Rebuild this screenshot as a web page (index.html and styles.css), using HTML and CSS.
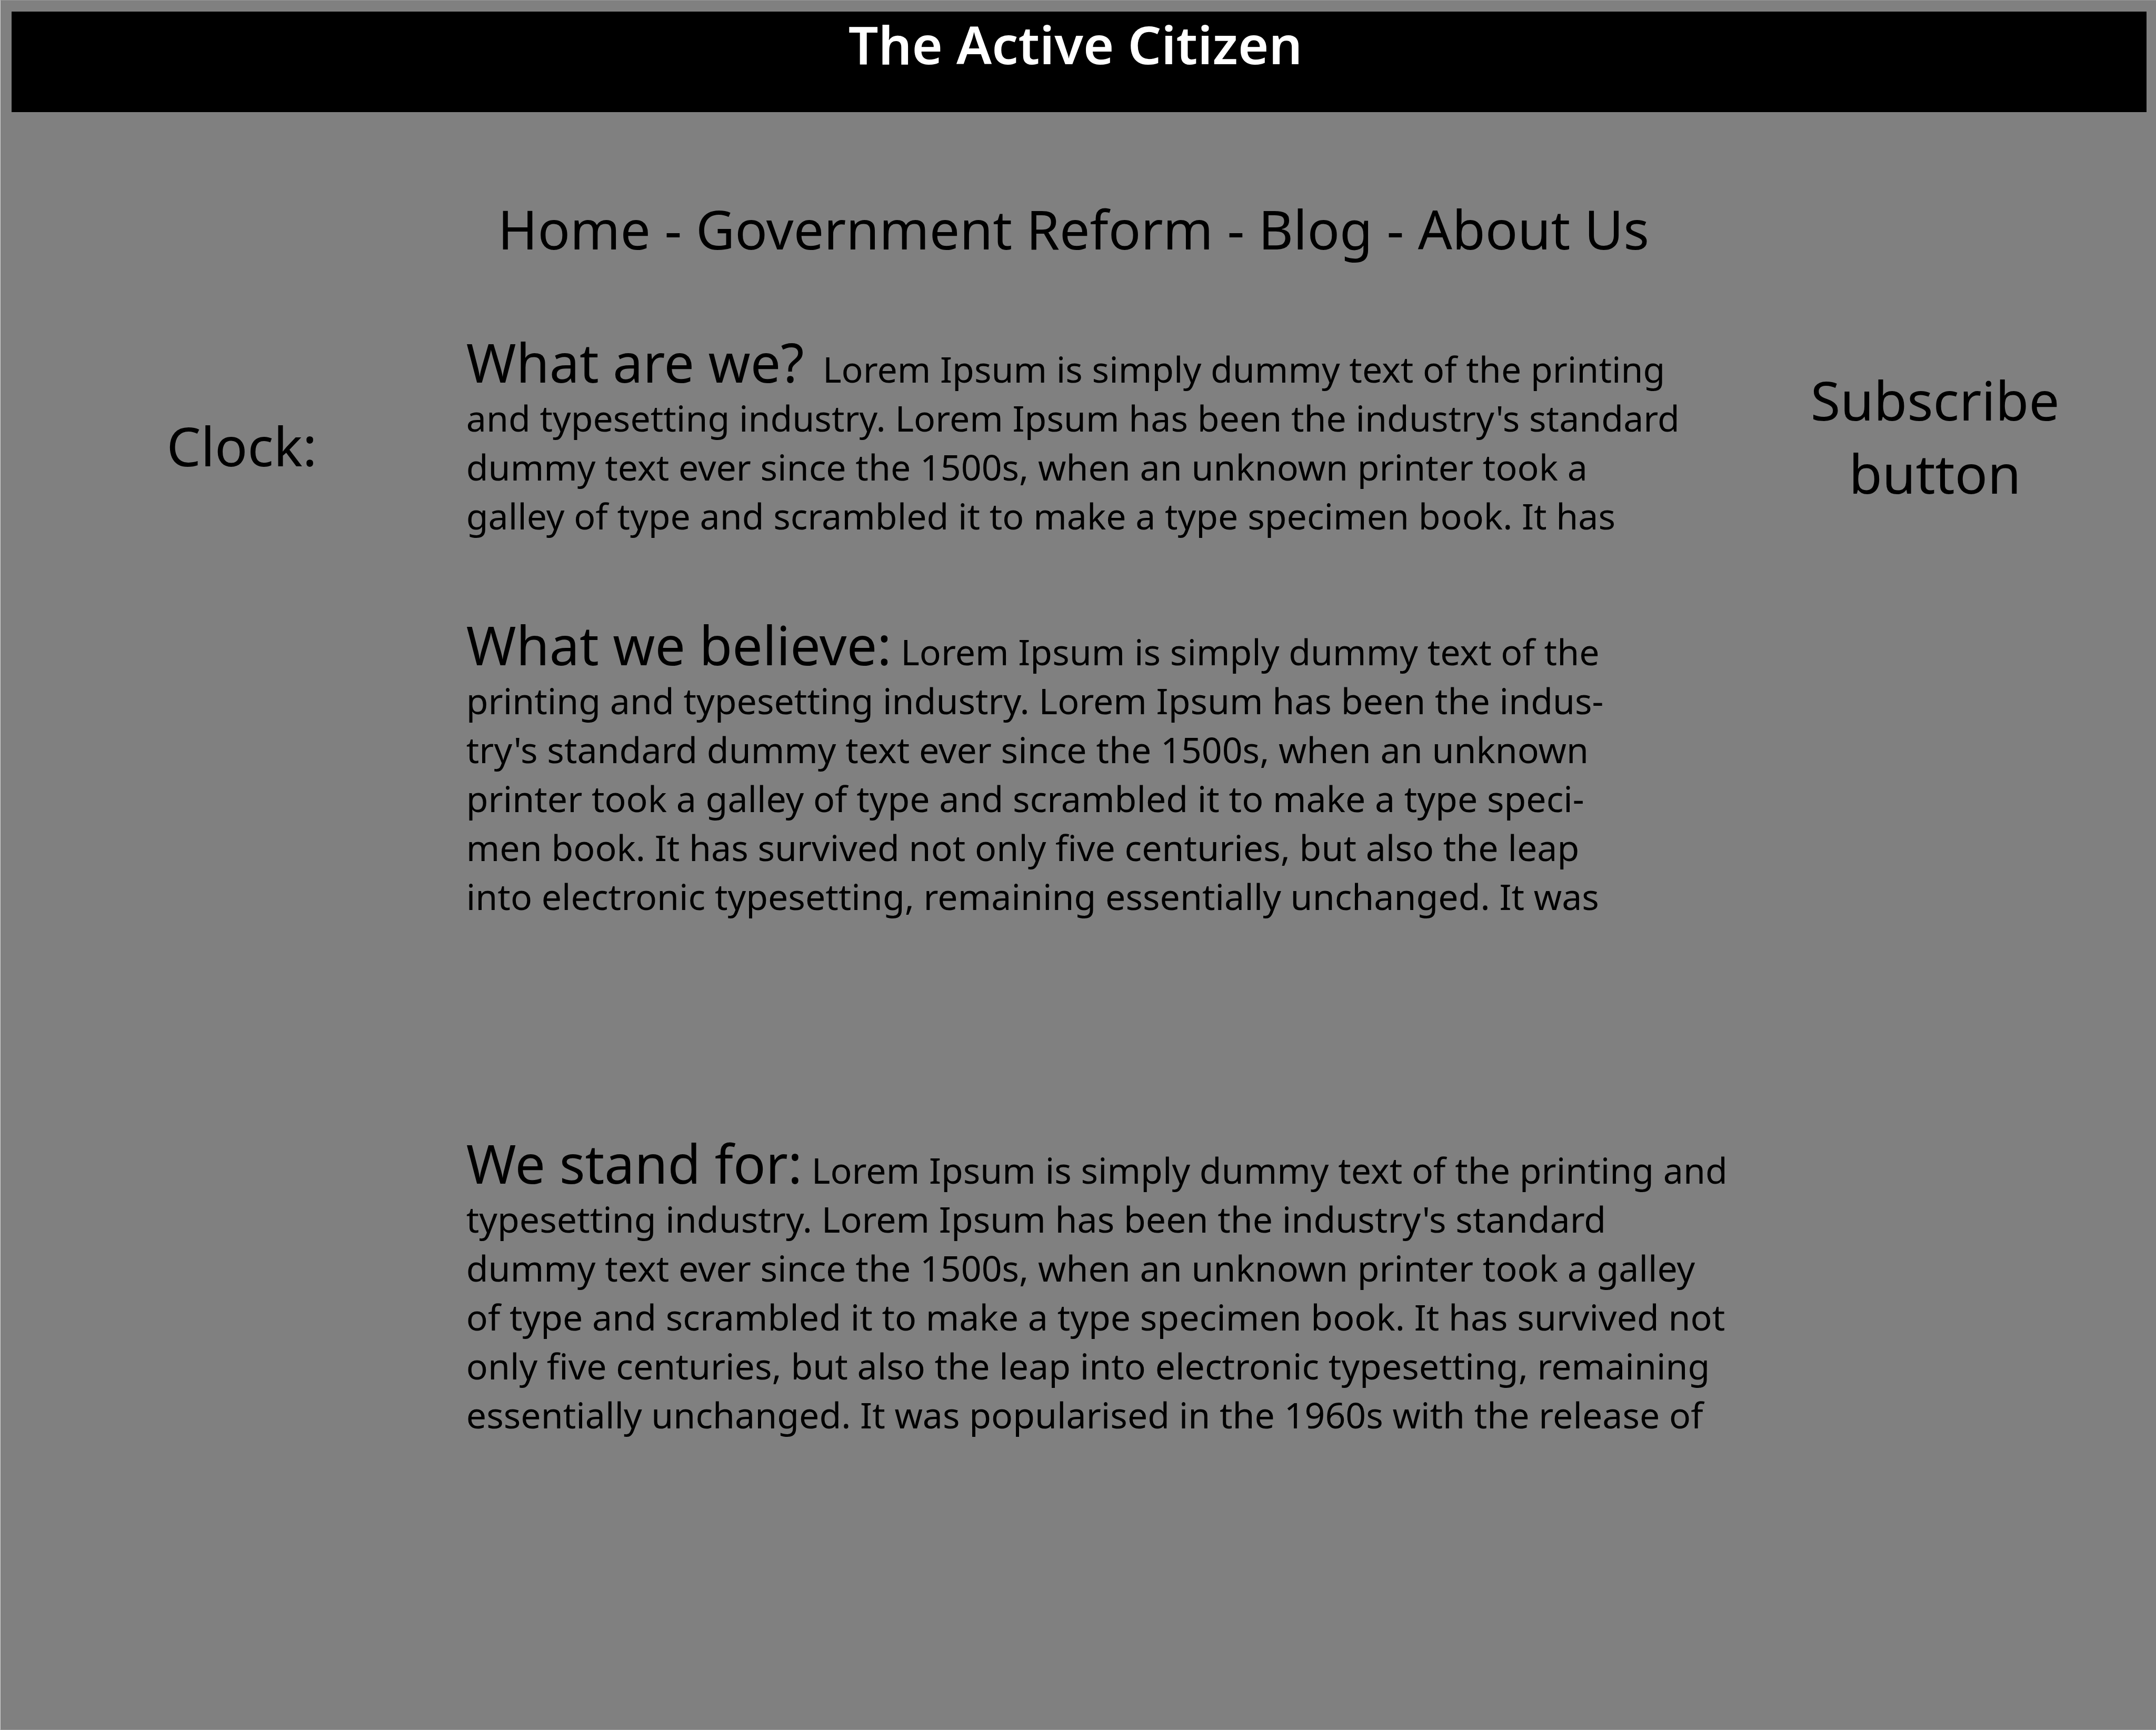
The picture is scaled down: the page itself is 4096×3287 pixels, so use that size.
FILE: index.html
```html
<!DOCTYPE html>
<html lang="en">
<head>
<meta charset="utf-8">
<meta name="viewport" content="width=device-width, initial-scale=1">
<title>The Active Citizen</title>
<link rel="stylesheet" href="styles.css">
</head>
<body class="page">
<header class="masthead">
<h1 class="masthead-title">The Active Citizen</h1>
</header>
<nav class="site-nav" aria-label="Main">
<a href="#home">Home</a> - <a href="#reform">Government Reform</a> - <a href="#blog">Blog</a> - <a href="#about">About Us</a>
</nav>
<div class="columns">
<aside class="clock">
<p class="clock-label">Clock:</p>
</aside>
<main class="content">
<section class="intro">
<h2 class="lead">What are we?</h2>&nbsp; Lorem Ipsum is simply dummy text of the printing<br>
and typesetting industry. Lorem Ipsum has been the industry's standard<br>
dummy text ever since the 1500s, when an unknown printer took a<br>
galley of type and scrambled it to make a type specimen book. It has
</section>
<section class="beliefs">
<h2 class="lead">What we believe:</h2> Lorem Ipsum is simply dummy text of the<br>
printing and typesetting industry. Lorem Ipsum has been the indus-<br>
try's standard dummy text ever since the 1500s, when an unknown<br>
printer took a galley of type and scrambled it to make a type speci-<br>
men book. It has survived not only five centuries, but also the leap<br>
into electronic typesetting, remaining essentially unchanged. It was
</section>
<section class="causes">
<h2 class="lead">We stand for:</h2> Lorem Ipsum is simply dummy text of the printing and<br>
typesetting industry. Lorem Ipsum has been the industry's standard<br>
dummy text ever since the 1500s, when an unknown printer took a galley<br>
of type and scrambled it to make a type specimen book. It has survived not<br>
only five centuries, but also the leap into electronic typesetting, remaining<br>
essentially unchanged. It was popularised in the 1960s with the release of
</section>
</main>
<aside class="subscribe">
<button class="subscribe-button" type="button">Subscribe<br>button</button>
</aside>
</div>
</body>
</html>
```

FILE: styles.css
```css
* {
  box-sizing: border-box;
}

.page {
  display: flow-root;
  min-height: 100vh;
  margin: 0;
  border: solid #999;
  border-width: 1px 0 1px 1px;
  border-left-color: #d4d4d4;
  background: #808080;
  color: #000;
  font-family: "Noto Sans", "Open Sans", sans-serif;
  font-size: 68px;
  line-height: 93px;
}

.masthead {
  margin: 21px 18px 0 21px;
  padding: 0 14px 68px 0;
  background: #000;
  color: #fff;
  text-align: center;
}

.masthead-title {
  margin: 0;
  font-size: 100px;
  font-weight: 600;
  line-height: 123px;
}

.site-nav {
  margin-top: 152px;
  padding-right: 18px;
  font-size: 102px;
  line-height: 140px;
  text-align: center;
}

.site-nav a {
  color: inherit;
  text-decoration: none;
}

.columns {
  display: grid;
  grid-template-columns: minmax(0, 885fr) minmax(0, 2419fr) minmax(0, 792fr);
  margin-top: 136px;
}

.clock,
.subscribe {
  font-size: 103px;
  line-height: 139px;
  text-align: center;
}

.clock {
  padding: 136px 0 0 32px;
}

.clock-label {
  margin: 0;
}

.content {
  white-space: nowrap;
}

.lead {
  display: inline;
  margin: 0;
  font-size: 102px;
  font-weight: 400;
}

.beliefs {
  margin-top: 152px;
}

.causes {
  margin-top: 414px;
}

.subscribe {
  padding: 49px 48px 0 0;
}

.subscribe-button {
  padding: 0;
  border: 0;
  background: none;
  color: inherit;
  font: inherit;
  cursor: pointer;
}
```
